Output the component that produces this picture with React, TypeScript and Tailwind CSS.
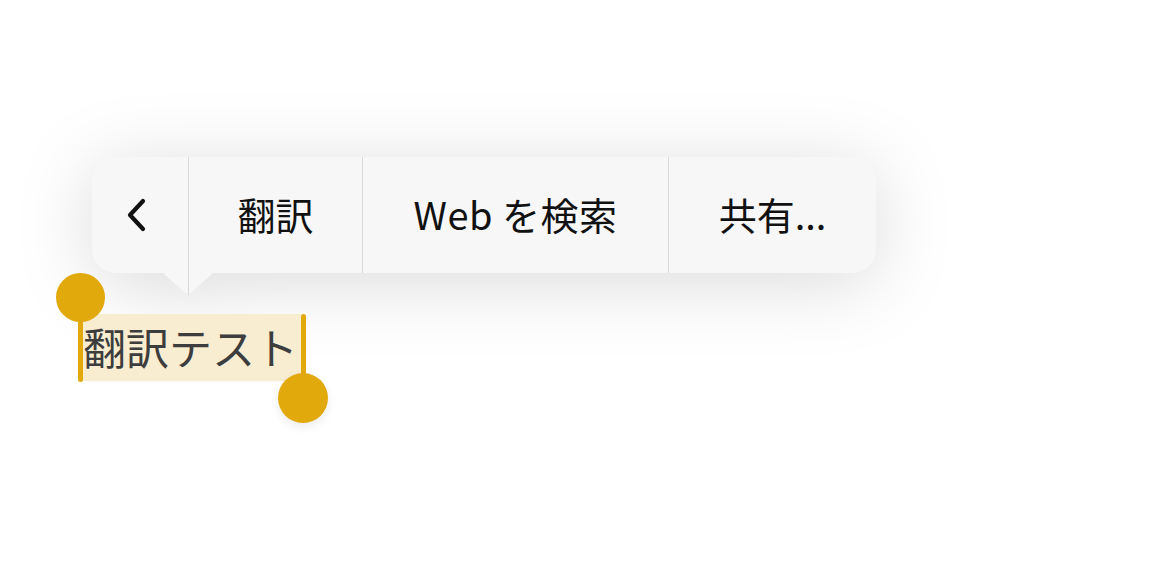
const jp = '[font-family:"Noto_Sans_CJK_JP","Noto_Sans",sans-serif]';

function Segment({ width, children, last }: { width: string; children: React.ReactNode; last?: boolean }) {
  return (
    <div
      className={`${width} flex h-full items-center justify-center ${last ? '' : 'border-r border-[#d9d9d9]'}`}
    >
      {children}
    </div>
  );
}

export default function App() {
  return (
    <div className={`h-[564px] w-full overflow-hidden bg-white ${jp}`}>
      <div className="pl-[92px] pt-[157px]">
        {/* 编辑菜单 */}
        <div className="relative w-[784px] drop-shadow-[0_10px_36px_rgba(0,0,0,0.14)]">
          <div className="flex h-[116px] rounded-[24px] bg-[#f7f7f7] text-[38px] leading-none text-[#111]">
            <Segment width="w-[97px]">
              <svg className="-translate-x-[3px]" width="24" height="34" viewBox="0 0 24 34">
                <path
                  d="M18 3 L5 17 L18 31"
                  fill="none"
                  stroke="#111"
                  strokeWidth="4.2"
                  strokeLinecap="round"
                  strokeLinejoin="round"
                />
              </svg>
            </Segment>
            <Segment width="w-[174px]">
              <span className="-translate-y-[1px]">翻訳</span>
            </Segment>
            <Segment width="w-[306px]">
              <span className="-translate-y-[1px] tracking-[0.5px]">Web を検索</span>
            </Segment>
            <Segment width="w-[207px]" last>
              <span className="-translate-y-[1px]">共有...</span>
            </Segment>
          </div>
          <svg
            className="absolute left-[70px] top-[115px]"
            width="52"
            height="24"
            viewBox="0 0 52 24"
          >
            <path d="M0 0 L22 20 Q26 23.5 30 20 L52 0 Z" fill="#f7f7f7" />
            <line x1="26.5" y1="0" x2="26.5" y2="23" stroke="#d9d9d9" strokeWidth="1" />
          </svg>
        </div>
      </div>

      {/* 选中的文本 */}
      <div className="pl-[83px] pt-[41px]">
        <span className="relative inline-flex h-[67px] items-center bg-[#f8ecd1] pr-[3px] text-[43px] leading-none text-[#3d3d3d]">
          <span className="-translate-y-[1px]">翻訳テスト</span>
          <span className="absolute -left-[5px] top-[-16px] h-[84px] w-[5px] rounded-b-full bg-[#e2a90c]" />
          <span className="absolute -left-[27px] -top-[41px] h-[49px] w-[49px] rounded-full bg-[#e2a90c]" />
          <span className="absolute -right-[5px] top-0 h-[82px] w-[5px] rounded-t-full bg-[#e2a90c]" />
          <span className="absolute -right-[27px] top-[59px] h-[50px] w-[50px] rounded-full bg-[#e2a90c] shadow-[0_4px_10px_rgba(0,0,0,0.08)]" />
        </span>
      </div>
    </div>
  );
}
